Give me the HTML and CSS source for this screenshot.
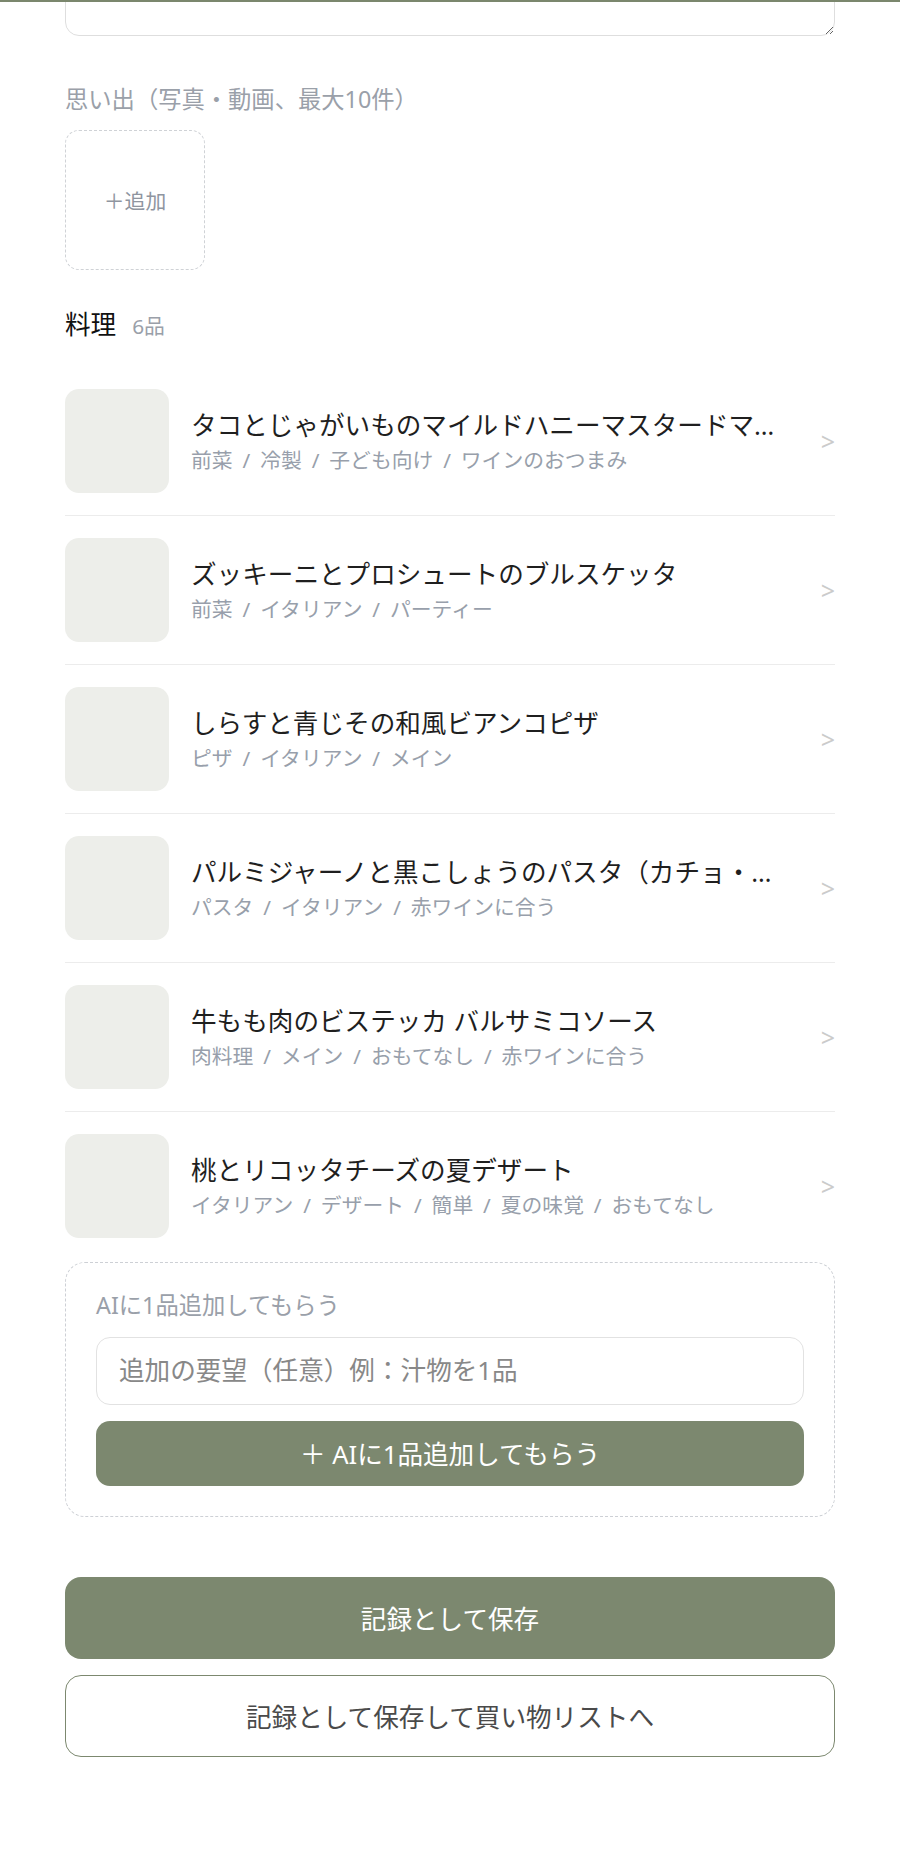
FILE: index.html
```html
<!doctype html>
<html lang="ja">
  <head>
    <meta charset="UTF-8" />
    <meta name="viewport" content="width=device-width, initial-scale=1.0" />
    <link rel="stylesheet" href="styles.css">
    <title>記録を編集</title>
  </head>
  <body>
    <div class="topline"></div>
    <main class="container">
      <!-- メモ欄（上側はスクロールで見えていない） -->
      <div class="note-clip">
        <textarea class="note"></textarea>
      </div>

      <!-- 思い出 -->
      <section class="memories">
        <p class="label">思い出（写真・動画、最大10件）</p>
        <button class="add-media" type="button">＋追加</button>
      </section>

      <!-- 料理 -->
      <section class="dishes">
        <h2 class="dishes-title">料理<span class="count">6品</span></h2>
        <ul class="dish-list">
          <li class="dish">
            <div class="thumb"></div>
            <div class="dish-body">
              <p class="dish-name">タコとじゃがいものマイルドハニーマスタードマリネ</p>
              <p class="dish-tags">前菜 / 冷製 / 子ども向け / ワインのおつまみ</p>
            </div>
            <span class="chevron">&gt;</span>
          </li>
          <li class="dish">
            <div class="thumb"></div>
            <div class="dish-body">
              <p class="dish-name">ズッキーニとプロシュートのブルスケッタ</p>
              <p class="dish-tags">前菜 / イタリアン / パーティー</p>
            </div>
            <span class="chevron">&gt;</span>
          </li>
          <li class="dish">
            <div class="thumb"></div>
            <div class="dish-body">
              <p class="dish-name">しらすと青じその和風ビアンコピザ</p>
              <p class="dish-tags">ピザ / イタリアン / メイン</p>
            </div>
            <span class="chevron">&gt;</span>
          </li>
          <li class="dish">
            <div class="thumb"></div>
            <div class="dish-body">
              <p class="dish-name">パルミジャーノと黒こしょうのパスタ（カチョ・エ・ペペ風）</p>
              <p class="dish-tags">パスタ / イタリアン / 赤ワインに合う</p>
            </div>
            <span class="chevron">&gt;</span>
          </li>
          <li class="dish">
            <div class="thumb"></div>
            <div class="dish-body">
              <p class="dish-name">牛もも肉のビステッカ バルサミコソース</p>
              <p class="dish-tags">肉料理 / メイン / おもてなし / 赤ワインに合う</p>
            </div>
            <span class="chevron">&gt;</span>
          </li>
          <li class="dish">
            <div class="thumb"></div>
            <div class="dish-body">
              <p class="dish-name">桃とリコッタチーズの夏デザート</p>
              <p class="dish-tags">イタリアン / デザート / 簡単 / 夏の味覚 / おもてなし</p>
            </div>
            <span class="chevron">&gt;</span>
          </li>
        </ul>

        <!-- AIに追加してもらう -->
        <div class="ai-box">
          <p class="label">AIに1品追加してもらう</p>
          <input class="ai-input" type="text" placeholder="追加の要望（任意）例：汁物を1品" />
          <button class="btn btn-primary btn-ai" type="button">＋ AIに1品追加してもらう</button>
        </div>
      </section>

      <div class="actions">
        <button class="btn btn-primary btn-save" type="button">記録として保存</button>
        <button class="btn btn-outline btn-save" type="button">記録として保存して買い物リストへ</button>
      </div>
    </main>
  </body>
</html>
```

FILE: styles.css
```css
html,
body {
  margin: 0;
  background: #fff;
  font-family: "Noto Sans", "Noto Sans CJK JP", sans-serif;
  color: #1f1f1f;
}

.topline {
  height: 2px;
  background: #7b876d;
}

.container {
  padding: 0 65px 80px;
}

.note-clip {
  height: 34px;
  overflow: hidden;
  display: flex;
  flex-direction: column;
  justify-content: flex-end;
}

.note {
  flex-shrink: 0;
  width: 100%;
  height: 140px;
  box-sizing: border-box;
  border: 1.5px solid #dedede;
  border-radius: 14px;
  resize: vertical;
}

p {
  margin: 0;
}

.label {
  font-size: 23.3px;
  line-height: 1.45;
  color: #9aa0a9;
}

.memories {
  margin-top: 47px;
}

.add-media {
  margin-top: 13px;
  width: 140px;
  height: 140px;
  border: 1.5px dashed #cfd2d6;
  border-radius: 14px;
  background: #fff;
  font-family: inherit;
  font-size: 20.8px;
  color: #8f95a0;
}

.dishes {
  margin-top: 36px;
}

.dishes-title {
  margin: 0;
  font-size: 25.6px;
  font-weight: 400;
  line-height: 1.5;
  color: #111;
}

.count {
  margin-left: 16px;
  font-size: 20.8px;
  color: #9aa0a9;
}

.dish-list {
  list-style: none;
  margin: 23px 0 2px;
  padding: 0;
}

.dish {
  display: flex;
  align-items: center;
  gap: 22px;
  padding: 22px 0;
  border-bottom: 1px solid #ececec;
}

.dish:last-child {
  border-bottom: none;
}

.thumb {
  flex-shrink: 0;
  width: 104px;
  height: 104px;
  border-radius: 14px;
  background: #edeeea;
}

.dish-body {
  flex: 1;
  min-width: 0;
}

.dish-name {
  font-size: 25.6px;
  line-height: 1.4;
  white-space: nowrap;
  overflow: hidden;
  text-overflow: ellipsis;
}

.dish-tags {
  margin-top: 2px;
  font-size: 20.8px;
  line-height: 1.4;
  word-spacing: 4.5px;
  color: #989fab;
  white-space: nowrap;
  overflow: hidden;
}

.chevron {
  flex-shrink: 0;
  margin-left: 12px;
  font-size: 25px;
  color: #cbcbcb;
}

.ai-box {
  border: 1.5px dashed #cdd0d5;
  border-radius: 20px;
  padding: 26px 30px 30px;
}

.ai-input {
  display: block;
  margin-top: 14px;
  width: 100%;
  height: 68px;
  box-sizing: border-box;
  padding: 0 22px;
  border: 1.5px solid #e2e2e2;
  border-radius: 14px;
  font-family: inherit;
  font-size: 25.6px;
  color: #333;
}

.ai-input::placeholder {
  color: #888;
}

.btn {
  display: block;
  width: 100%;
  box-sizing: border-box;
  font-family: inherit;
  font-size: 25.6px;
}

.btn-primary {
  border: none;
  background: #7c886f;
  color: #fff;
}

.btn-outline {
  border: 1.5px solid #7c886f;
  background: #fff;
  color: #4a4a4a;
}

.btn-ai {
  margin-top: 16px;
  height: 65px;
  border-radius: 14px;
}

.actions {
  margin-top: 60px;
  display: flex;
  flex-direction: column;
  gap: 16px;
}

.btn-save {
  height: 82px;
  border-radius: 16px;
}
```
